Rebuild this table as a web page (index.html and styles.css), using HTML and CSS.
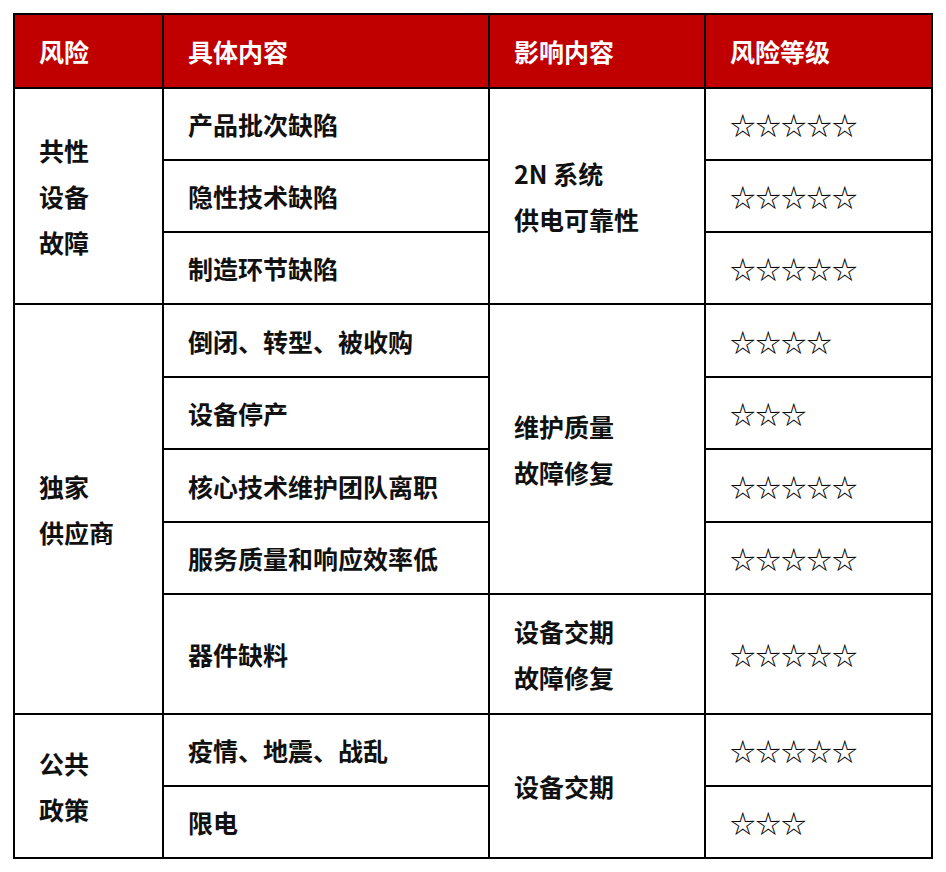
FILE: index.html
```html
<!DOCTYPE html>
<html lang="zh">
<head>
<meta charset="utf-8">
<link rel="stylesheet" href="styles.css">
</head>
<body>
<table class="risk">
  <colgroup>
    <col class="c1"><col class="c2"><col class="c3"><col class="c4">
  </colgroup>
  <thead>
    <tr class="head"><th>风险</th><th>具体内容</th><th>影响内容</th><th>风险等级</th></tr>
  </thead>
  <tbody>
    <tr><td rowspan="3">共性<br>设备<br>故障</td><td>产品批次缺陷</td><td rowspan="3">2N 系统<br>供电可靠性</td><td class="stars">☆☆☆☆☆</td></tr>
    <tr><td>隐性技术缺陷</td><td class="stars">☆☆☆☆☆</td></tr>
    <tr><td>制造环节缺陷</td><td class="stars">☆☆☆☆☆</td></tr>
    <tr class="r73"><td rowspan="5">独家<br>供应商</td><td>倒闭、转型、被收购</td><td rowspan="4">维护质量<br>故障修复</td><td class="stars">☆☆☆☆</td></tr>
    <tr><td>设备停产</td><td class="stars">☆☆☆</td></tr>
    <tr class="r73"><td>核心技术维护团队离职</td><td class="stars">☆☆☆☆☆</td></tr>
    <tr><td>服务质量和响应效率低</td><td class="stars">☆☆☆☆☆</td></tr>
    <tr class="tall"><td>器件缺料</td><td>设备交期<br>故障修复</td><td class="stars">☆☆☆☆☆</td></tr>
    <tr><td rowspan="2">公共<br>政策</td><td>疫情、地震、战乱</td><td rowspan="2">设备交期</td><td class="stars">☆☆☆☆☆</td></tr>
    <tr><td>限电</td><td class="stars">☆☆☆</td></tr>
  </tbody>
</table>
</body>
</html>
```
FILE: styles.css
```css
html, body {
  margin: 0;
  background: #fff;
}
body {
  padding: 13px 0 0 13px;
  font-family: "Noto Sans CJK SC", "Noto Sans", sans-serif;
}
.risk {
  border-collapse: collapse;
  table-layout: fixed;
  width: 918px;
  color: #111;
  font-size: 25px;
  font-weight: 700;
}
.c1 { width: 149px; }
.c2 { width: 326px; }
.c3 { width: 216px; }
.c4 { width: 227px; }
.risk th, .risk td {
  border: 2px solid #000;
  text-align: left;
  vertical-align: middle;
  padding: 0 0 0 24px;
  line-height: 46px;
}
.risk tr { height: 72px; }
.risk tr.r73 { height: 73px; }
.risk tr.head { height: 74px; }
.risk tr.tall { height: 120px; }
.risk th {
  background: #c00000;
  color: #fff;
  font-weight: 700;
}
.risk td.stars {
  font-weight: 400;
  color: #000;
  font-size: 25.5px;
}
```
